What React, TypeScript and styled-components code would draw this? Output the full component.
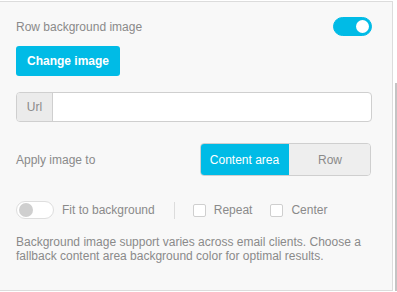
import styled, { createGlobalStyle } from 'styled-components'

const Global = createGlobalStyle`
  body {
    margin: 0;
    background: #fff;
    font-family: 'Liberation Sans', Arial, sans-serif;
  }
`

const accent = '#00bbe6'

const App = () => {
  return (
    <>
      <Global />
      <Page>
        <Panel>
          <HeaderRow>
            <Label>Row background image</Label>
            <Toggle on />
          </HeaderRow>

          <Button>Change image</Button>

          <InputGroup>
            <Addon>Url</Addon>
            <Field />
          </InputGroup>

          <ApplyRow>
            <Label>Apply image to</Label>
            <Segmented>
              <Segment active>Content area</Segment>
              <Segment>Row</Segment>
            </Segmented>
          </ApplyRow>

          <OptionsRow>
            <Toggle />
            <Label>Fit to background</Label>
            <Divider />
            <Check />
            <Label>Repeat</Label>
            <Check />
            <Label>Center</Label>
          </OptionsRow>

          <Help>
            Background image support varies across email clients. Choose a fallback content area background color for optimal results.
          </Help>
        </Panel>
        <Scroll>
          <Thumb />
        </Scroll>
      </Page>
    </>
  )
}

const Toggle = ({ on }: { on?: boolean }) => (
  <Switch on={on}>
    <Knob on={on} />
  </Switch>
)

const Page = styled.div`
  display: flex;
  padding-top: 1px;
  height: 291px;
  box-sizing: border-box;
`

const Panel = styled.div`
  width: 393px;
  height: 290px;
  box-sizing: border-box;
  background: #f8f8f8;
  border-top: 1px solid #dcdcdc;
  border-right: 1px solid #dcdcdc;
  border-bottom: 1px solid #dcdcdc;
  padding: 14px 20px 0 16px;
  display: flex;
  flex-direction: column;
  align-items: flex-start;
`

const Scroll = styled.div`
  width: 4px;
  padding-top: 82px;
  display: flex;
  justify-content: flex-end;
`

const Thumb = styled.div`
  width: 2px;
  height: 208px;
  background: #c4c4c4;
`

const HeaderRow = styled.div`
  align-self: stretch;
  display: flex;
  align-items: center;
  justify-content: space-between;
  height: 21px;
`

const Label = styled.span`
  font-size: 12px;
  color: #8a8a8a;
  white-space: nowrap;
`

const Switch = styled.div<{ on?: boolean }>`
  box-sizing: border-box;
  width: ${({ on }) => (on ? 39 : 38)}px;
  height: ${({ on }) => (on ? 19 : 18)}px;
  border-radius: 10px;
  background: ${({ on }) => (on ? accent : '#fff')};
  border: 1px solid ${({ on }) => (on ? accent : '#dedede')};
  display: flex;
  align-items: center;
  justify-content: ${({ on }) => (on ? 'flex-end' : 'flex-start')};
  padding: 0 2px;
  flex-shrink: 0;
`

const Knob = styled.div<{ on?: boolean }>`
  width: ${({ on }) => (on ? 13 : 14)}px;
  height: ${({ on }) => (on ? 13 : 14)}px;
  border-radius: 50%;
  background: ${({ on }) => (on ? '#fff' : '#cfcfcf')};
`

const Button = styled.button`
  margin-top: 9px;
  height: 30px;
  width: 104px;
  border: none;
  border-radius: 3px;
  background: ${accent};
  color: #fff;
  font-family: 'Liberation Sans', Arial, sans-serif;
  font-weight: bold;
  font-size: 12px;
  padding: 0;
`

const InputGroup = styled.div`
  margin-top: 16px;
  align-self: stretch;
  display: flex;
  height: 30px;
  box-sizing: border-box;
  border: 1px solid #cfcfcf;
  border-radius: 4px;
  overflow: hidden;
  background: #fff;
`

const Addon = styled.div`
  width: 35px;
  background: #ebebeb;
  border-right: 1px solid #cfcfcf;
  display: flex;
  align-items: center;
  justify-content: center;
  font-size: 12px;
  color: #8a8a8a;
`

const Field = styled.div`
  flex: 1;
`

const ApplyRow = styled.div`
  margin-top: 21px;
  align-self: stretch;
  display: flex;
  align-items: center;
  justify-content: space-between;
  padding-right: 1px;
`

const Segmented = styled.div`
  display: flex;
  width: 171px;
  height: 33px;
  box-sizing: border-box;
  border: 1px solid #cfcfcf;
  border-radius: 4px;
  overflow: hidden;
`

const Segment = styled.div<{ active?: boolean }>`
  width: ${({ active }) => (active ? 89 : 82)}px;
  flex-shrink: 0;
  display: flex;
  align-items: center;
  justify-content: center;
  font-size: 12px;
  background: ${({ active }) => (active ? accent : '#eeeeee')};
  color: ${({ active }) => (active ? '#fff' : '#8a8a8a')};
  margin: ${({ active }) => (active ? '-1px 0 -1px -1px' : '0')};
`

const OptionsRow = styled.div`
  margin-top: 25px;
  display: flex;
  align-items: center;
  height: 18px;
  & > ${Label} {
    margin-left: 8px;
  }
`

const Divider = styled.div`
  width: 1px;
  height: 17px;
  background: #dcdcdc;
  margin: 0 18px 0 19px;
`

const Check = styled.div`
  width: 13px;
  height: 13px;
  box-sizing: border-box;
  border: 1px solid #cfcfcf;
  border-radius: 2px;
  background: #fff;
  & ~ & {
    margin-left: 18px;
  }
`

const Help = styled.p`
  margin: 16px 0 0;
  font-size: 12px;
  line-height: 14px;
  color: #8a8a8a;
  width: 350px;
`

export default App
